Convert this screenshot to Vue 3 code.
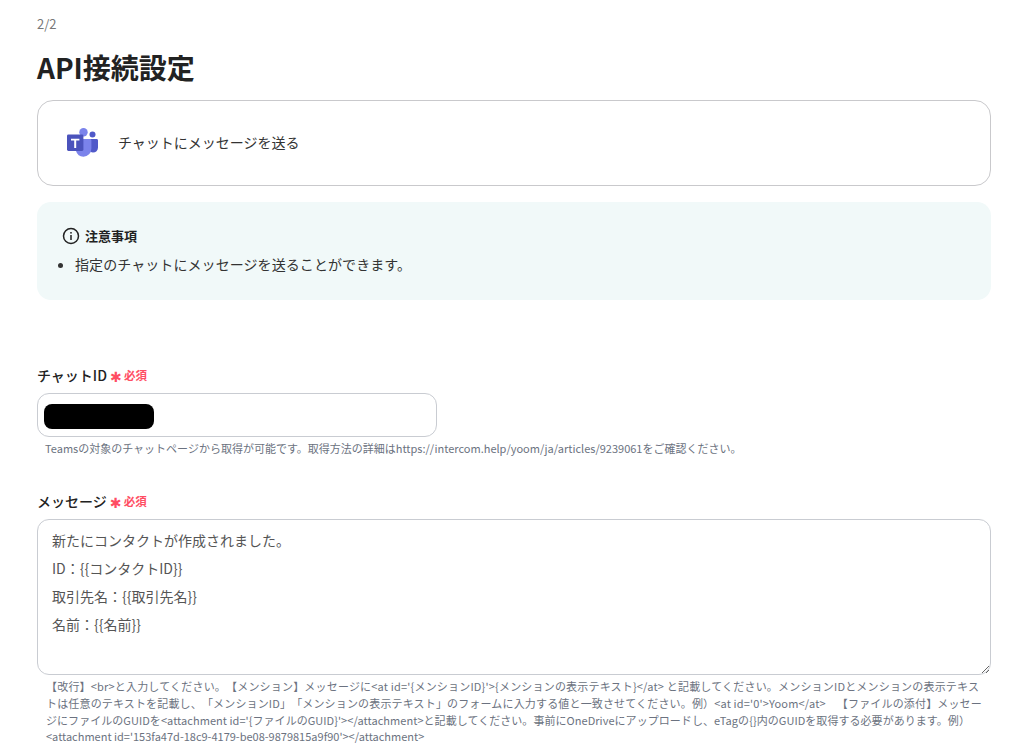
<script setup>
const message = `新たにコンタクトが作成されました。
ID：{{コンタクトID}}
取引先名：{{取引先名}}
名前：{{名前}}`
</script>

<template>
  <main class="page">
    <div class="step">2/2</div>
    <h1 class="title">API接続設定</h1>

    <section class="app-card">
      <svg class="teams" width="32" height="30" viewBox="0 0 32 30" aria-hidden="true">
        <circle cx="26.5" cy="7.6" r="3" fill="#5059c9" />
        <path d="M22 12h8.6c.8 0 1.4.6 1.4 1.4v7.2a5 5 0 0 1-5 5h-.2a5 5 0 0 1-4.8-5z" fill="#5059c9" />
        <circle cx="17.5" cy="5.2" r="4.2" fill="#7b83eb" />
        <path d="M11 12h13c.8 0 1.4.6 1.4 1.4v8.2a8 8 0 0 1-8 8.1 8 8 0 0 1-7.4-5.7z" fill="#7b83eb" />
        <rect x="1" y="7.6" width="16.4" height="16.4" rx="1.4" fill="#4b53bc" />
        <path d="M5 11.8h8.4v1.7h-3.2v7.4H8.200v-7.400H5z" fill="#fff" />
      </svg>
      <span class="app-text">チャットにメッセージを送る</span>
    </section>

    <section class="notice">
      <div class="notice-head">
        <svg width="18" height="18" viewBox="0 0 18 18" aria-hidden="true">
          <circle cx="9" cy="9" r="7.500" fill="none" stroke="#222" stroke-width="1.500" />
          <rect x="8.250" y="8" width="1.500" height="5" fill="#222" />
          <rect x="8.250" y="5" width="1.500" height="1.600" fill="#222" />
        </svg>
        <span>注意事項</span>
      </div>
      <ul class="notice-list">
        <li>指定のチャットにメッセージを送ることができます。</li>
      </ul>
    </section>

    <section class="field field-chat">
      <div class="label">チャットID<span class="star">✱</span><span class="req">必須</span></div>
      <div class="input"><span class="mask"></span></div>
      <p class="help help-single">Teamsの対象のチャットページから取得が可能です。取得方法の詳細はhttps://intercom.help/yoom/ja/articles/9239061をご確認ください。</p>
    </section>

    <section class="field field-message">
      <div class="label">メッセージ<span class="star">✱</span><span class="req">必須</span></div>
      <textarea class="textarea" :value="message" aria-label="メッセージ"></textarea>
      <div class="help help-multi">
        <p class="line line-a">【改行】&lt;br&gt;と入力してください。【メンション】メッセージに&lt;at id='{メンションID}'&gt;{メンションの表示テキスト}&lt;/at&gt; と記載してください。メンションIDとメンションの表示テキス</p>
        <p class="line line-b">トは任意のテキストを記載し、「メンションID」「メンションの表示テキスト」のフォームに入力する値と一致させてください。例）&lt;at id='0'&gt;Yoom&lt;/at&gt;　【ファイルの添付】メッセー</p>
        <p class="line line-c">ジにファイルのGUIDを&lt;attachment id='{ファイルのGUID}'&gt;&lt;/attachment&gt;と記載してください。事前にOneDriveにアップロードし、eTagの{}内のGUIDを取得する必要があります。例）</p>
        <p class="line">&lt;attachment id='153fa47d-18c9-4179-be08-9879815a9f90'&gt;&lt;/attachment&gt;</p>
      </div>
    </section>
  </main>
</template>

<style>
html, body { background: #fff; overflow: hidden; }
</style>

<style scoped>
.page {
  box-sizing: border-box;
  width: 1017px;
  height: 749px;
  overflow: hidden;
  padding: 15px 26px 0 37px;
  font-family: "Noto Sans CJK JP", "Noto Sans", sans-serif;
  text-spacing-trim: space-all;
  color: #222;
}
.step {
  font-size: 13px;
  line-height: 18px;
  color: #777;
}
.title {
  margin: 15px 0 0;
  font-size: 28px;
  line-height: 38px;
  font-weight: 700;
  color: #222;
}
.app-card {
  box-sizing: border-box;
  height: 86px;
  margin-top: 14px;
  padding: 0 28px;
  display: flex;
  align-items: center;
  gap: 20px;
  border: 1px solid #c9c9cc;
  border-radius: 16px;
}
.teams { flex: none; transform: translateY(-1px); }
.app-text {
  font-size: 14px;
  line-height: 20px;
  color: #333;
  transform: translateY(-1px);
}
.notice {
  box-sizing: border-box;
  height: 98px;
  margin-top: 16px;
  padding: 24px 25px;
  border-radius: 14px;
  background: #f1f9f9;
}
.notice-head {
  display: flex;
  align-items: center;
  gap: 5px;
  font-size: 13px;
  line-height: 20px;
  font-weight: 700;
}
.notice-list {
  margin: 8px 0 0;
  padding-left: 13px;
  font-size: 14px;
  line-height: 20px;
  letter-spacing: 0.08px;
  color: #333;
}
.field-chat { margin-top: 65px; }
.field-message { margin-top: 35px; }
.label {
  display: flex;
  align-items: center;
  height: 20px;
  font-size: 14px;
  font-weight: 500;
  color: #222;
}
.star {
  margin-left: 3px;
  width: 12px;
  font-family: "DejaVu Sans", sans-serif;
  font-size: 14px;
  line-height: 20px;
  height: 20px;
  font-weight: 400;
  color: #ff4d63;
  transform: translateY(2px);
}
.req {
  margin-left: 2px;
  font-size: 11.500px;
  font-weight: 700;
  color: #ff4d63;
}
.input {
  box-sizing: border-box;
  width: 400px;
  height: 44px;
  margin-top: 8px;
  padding: 10px 6px;
  border: 1px solid #c9ccd2;
  border-radius: 12px;
}
.mask {
  display: block;
  width: 110px;
  height: 25px;
  border-radius: 8px;
  background: #000;
}
.textarea {
  display: block;
  box-sizing: border-box;
  width: 954px;
  height: 156px;
  margin: 8px 0 0;
  padding: 6px 14px;
  border: 1px solid #c9ccd2;
  border-radius: 12px;
  outline: none;
  resize: vertical;
  font-family: inherit;
  text-spacing-trim: inherit;
  font-size: 14px;
  line-height: 28px;
  color: #555;
  background: #fff;
}
.help {
  margin: 0;
  font-size: 11px;
  color: #6b7280;
}
.help-single {
  margin-top: 3px;
  padding-left: 8px;
  line-height: 16px;
}
.help-multi {
  margin-top: 3px;
  padding: 0 0 0 9px;
  line-height: 16.800px;
}
.line {
  margin: 0;
  white-space: nowrap;
}
.line-a { letter-spacing: 0.19px; }
.line-b { letter-spacing: 0.16px; }
.line-c { letter-spacing: 0.05px; }
</style>
